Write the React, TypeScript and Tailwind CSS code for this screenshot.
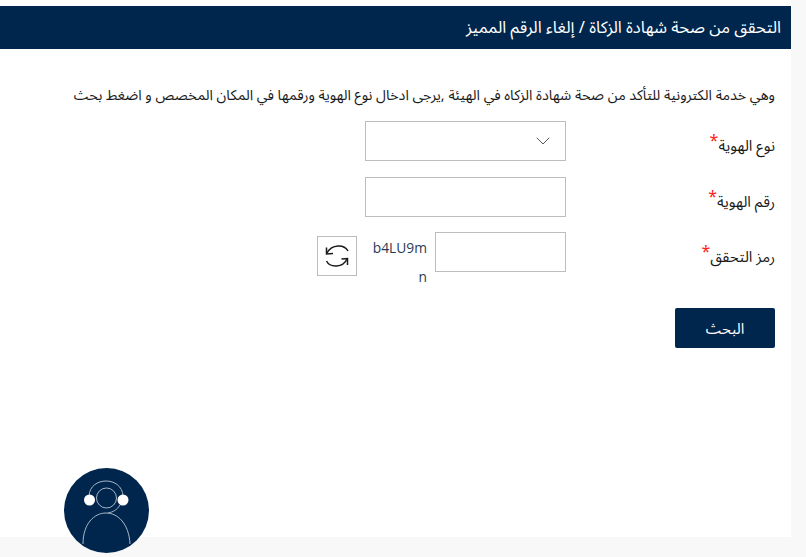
import { ChevronDown } from "lucide-react";

const ARABIC = "font-['Noto_Sans_Arabic','DejaVu_Sans','Noto_Sans',sans-serif]";

function Label({ text }: { text: string }) {
  return (
    <label className="w-[209px] shrink-0 pt-[12px] text-[15px] leading-[26px] text-[#1a1a1a]">
      {text}
      <span className="relative top-[-5px] text-[16px] text-[#ff2020]">*</span>
    </label>
  );
}

function AgentBadge() {
  return (
    <div className="absolute bottom-[4px] left-[64px] h-[85px] w-[85px] overflow-hidden rounded-full bg-[#00264d]">
      <svg viewBox="0 0 85 85" className="h-full w-full" fill="none">
        <circle cx="42.5" cy="30" r="10" stroke="#a9b7c5" strokeWidth="1" />
        <path d="M25 28 C26 8 58 8 59 28" stroke="#a9b7c5" strokeWidth="1" />
        <path d="M56 37 C53 42 49 44 44 45" stroke="#a9b7c5" strokeWidth="1" />
        <circle cx="25.5" cy="32" r="5.5" fill="#fff" />
        <circle cx="59" cy="32" r="5.5" fill="#fff" />
        <path d="M19 76 C19 56 30 45 42 45 C54 45 65 56 66 76" stroke="#a9b7c5" strokeWidth="1" />
      </svg>
    </div>
  );
}

function RefreshIcon() {
  return (
    <svg viewBox="0 0 38 38" className="h-[38px] w-[38px]" fill="none" stroke="#1a1a1a" strokeWidth="1.5">
      <path d="M30 14 C26 7 14 7 9 16" />
      <path d="M8.5 10.5 L8.5 17 L15 16.5" />
      <path d="M8.5 24 C12 31 25 31 29 22" />
      <path d="M29.5 28 L29.5 21.5 L23.5 22" />
    </svg>
  );
}

export default function App() {
  return (
    <div dir="rtl" className={`relative flex min-h-[557px] flex-col overflow-hidden bg-[#f8f8f8] ${ARABIC}`}>
      <div className="mr-[15px] flex h-[537px] flex-col bg-white pt-[6px]">
        <h1 className="flex h-[43px] items-center bg-[#00264d] pr-[10px] pt-[2px] text-[16.6px] text-white">
          التحقق من صحة شهادة الزكاة / إلغاء الرقم المميز
        </h1>
        <div className="flex flex-col pr-[16px]">
          <p className="mt-[35px] h-[37px] text-[14.3px] leading-[24px] text-[#1a1a1a]">
            وهي خدمة الكترونية للتأكد من صحة شهادة الزكاه في الهيئة ,يرجى ادخال نوع الهوية ورقمها في المكان المخصص و اضغط بحث
          </p>
          <div className="flex h-[56px] items-start">
            <Label text="نوع الهوية" />
            <div className="flex h-[40px] w-[201px] items-center justify-start border border-[#bdbdbd] bg-white pr-[10px]">
              <ChevronDown className="h-[24px] w-[24px] text-[#555]" strokeWidth={1} />
            </div>
          </div>
          <div className="flex h-[55px] items-start">
            <Label text="رقم الهوية" />
            <input className="h-[40px] w-[201px] border border-[#bdbdbd] bg-white outline-none" />
          </div>
          <div className="flex h-[76px] items-start">
            <Label text="رمز التحقق" />
            <input className="h-[40px] w-[131px] border border-[#bdbdbd] bg-white outline-none" />
            <div dir="ltr" className="mr-[8px] w-[56px] pt-[1px] text-right font-['Open_Sans',sans-serif] text-[13.8px] leading-[29px] break-all text-[#2b3a55]">
              b4LU9mn
            </div>
            <button className="mr-[14px] mt-[4px] flex h-[40px] w-[40px] items-center justify-center border border-[#bdbdbd] bg-white">
              <RefreshIcon />
            </button>
          </div>
          <button className="h-[40px] w-[100px] rounded-[2px] bg-[#00264d] pt-[3px] text-[15px] text-white">البحث</button>
        </div>
      </div>
      <AgentBadge />
    </div>
  );
}
